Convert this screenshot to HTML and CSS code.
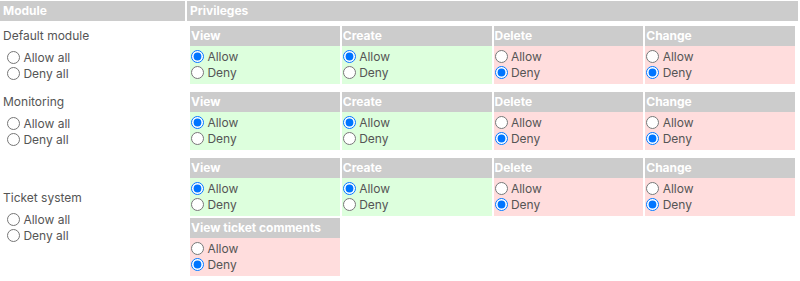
FILE: index.html
```html
<!DOCTYPE html>
<html lang="en">
<head>
<meta charset="UTF-8">
<meta name="viewport" content="width=device-width, initial-scale=1.0">
<title>Module privileges</title>
<link rel="stylesheet" href="styles.css">
</head>
<body>
<div class="perm-table">
  <div class="th">Module</div>
  <div class="th">Privileges</div>

  <!-- Default module -->
  <div class="module">
    <div class="module-name">Default module</div>
    <label class="all"><input type="radio" name="m1-all"> Allow all</label>
    <label class="all"><input type="radio" name="m1-all"> Deny all</label>
  </div>
  <div class="privs">
    <div class="priv allow">
      <div class="priv-title">View</div>
      <label><input type="radio" name="m1-view" checked> Allow</label>
      <label><input type="radio" name="m1-view"> Deny</label>
    </div>
    <div class="priv allow">
      <div class="priv-title">Create</div>
      <label><input type="radio" name="m1-create" checked> Allow</label>
      <label><input type="radio" name="m1-create"> Deny</label>
    </div>
    <div class="priv deny">
      <div class="priv-title">Delete</div>
      <label><input type="radio" name="m1-delete"> Allow</label>
      <label><input type="radio" name="m1-delete" checked> Deny</label>
    </div>
    <div class="priv deny">
      <div class="priv-title">Change</div>
      <label><input type="radio" name="m1-change"> Allow</label>
      <label><input type="radio" name="m1-change" checked> Deny</label>
    </div>
  </div>

  <!-- Monitoring -->
  <div class="module">
    <div class="module-name">Monitoring</div>
    <label class="all"><input type="radio" name="m2-all"> Allow all</label>
    <label class="all"><input type="radio" name="m2-all"> Deny all</label>
  </div>
  <div class="privs">
    <div class="priv allow">
      <div class="priv-title">View</div>
      <label><input type="radio" name="m2-view" checked> Allow</label>
      <label><input type="radio" name="m2-view"> Deny</label>
    </div>
    <div class="priv allow">
      <div class="priv-title">Create</div>
      <label><input type="radio" name="m2-create" checked> Allow</label>
      <label><input type="radio" name="m2-create"> Deny</label>
    </div>
    <div class="priv deny">
      <div class="priv-title">Delete</div>
      <label><input type="radio" name="m2-delete"> Allow</label>
      <label><input type="radio" name="m2-delete" checked> Deny</label>
    </div>
    <div class="priv deny">
      <div class="priv-title">Change</div>
      <label><input type="radio" name="m2-change"> Allow</label>
      <label><input type="radio" name="m2-change" checked> Deny</label>
    </div>
  </div>

  <!-- Ticket system -->
  <div class="module">
    <div class="module-name">Ticket system</div>
    <label class="all"><input type="radio" name="m3-all"> Allow all</label>
    <label class="all"><input type="radio" name="m3-all"> Deny all</label>
  </div>
  <div class="privs">
    <div class="priv allow">
      <div class="priv-title">View</div>
      <label><input type="radio" name="m3-view" checked> Allow</label>
      <label><input type="radio" name="m3-view"> Deny</label>
    </div>
    <div class="priv allow">
      <div class="priv-title">Create</div>
      <label><input type="radio" name="m3-create" checked> Allow</label>
      <label><input type="radio" name="m3-create"> Deny</label>
    </div>
    <div class="priv deny">
      <div class="priv-title">Delete</div>
      <label><input type="radio" name="m3-delete"> Allow</label>
      <label><input type="radio" name="m3-delete" checked> Deny</label>
    </div>
    <div class="priv deny">
      <div class="priv-title">Change</div>
      <label><input type="radio" name="m3-change"> Allow</label>
      <label><input type="radio" name="m3-change" checked> Deny</label>
    </div>
    <div class="priv deny">
      <div class="priv-title">View ticket comments</div>
      <label><input type="radio" name="m3-comments"> Allow</label>
      <label><input type="radio" name="m3-comments" checked> Deny</label>
    </div>
  </div>
</div>
</body>
</html>
```

FILE: styles.css
```css
body {
  font-family: Inter, "Noto Sans", sans-serif;
  font-size: 12px;
  color: #555;
  background-color: #fff;
  margin: 0;
  padding-top: 1px;
}
.perm-table {
  display: grid;
  grid-template-columns: 185px 1fr;
  column-gap: 2px;
  row-gap: 2px;
  width: 798px;
}
.th {
  background-color: #ccc;
  color: #fff;
  font-weight: bold;
  height: 20px;
  line-height: 20px;
  padding-left: 3px;
}
.module {
  display: flex;
  flex-direction: column;
  justify-content: center;
  padding-left: 3px;
}
.module-name {
  line-height: 16px;
  margin-bottom: 6px;
}
label {
  display: block;
  line-height: 16px;
  white-space: nowrap;
}
label.all input {
  margin-left: 4px;
}
input[type="radio"] {
  width: 13px;
  height: 13px;
  margin: 0 0 0 1px;
  vertical-align: -2px;
}
.privs {
  display: grid;
  grid-template-columns: repeat(4, 1fr);
  gap: 2px;
  padding: 3px;
}
.priv {
  padding-bottom: 3px;
}
.priv.allow {
  background-color: #dfd;
}
.priv.deny {
  background-color: #fdd;
}
.priv-title {
  background-color: #ccc;
  color: #fff;
  font-weight: bold;
  height: 20px;
  line-height: 20px;
  padding-left: 1px;
  margin-bottom: 3px;
}
```
